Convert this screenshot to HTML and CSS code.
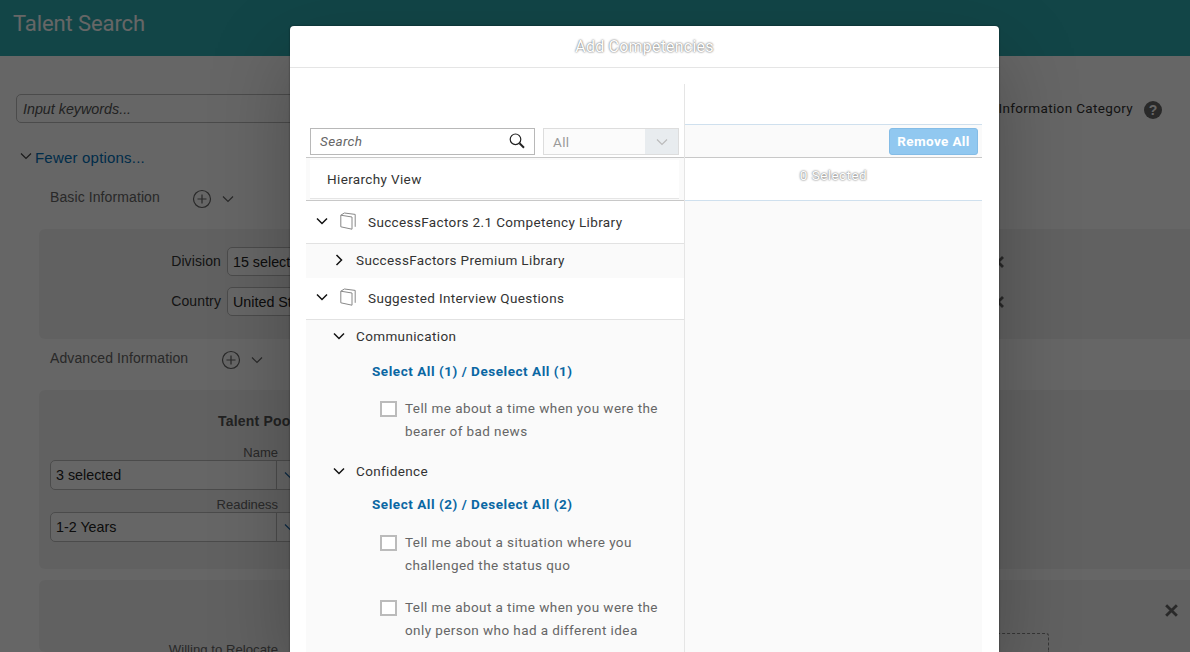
FILE: index.html
```html
<!DOCTYPE html>
<html lang="en">
<head>
  <meta charset="UTF-8" />
  <meta name="viewport" content="width=device-width, initial-scale=1" />
  <title>Talent Search</title>
  <link rel="stylesheet" href="styles.css">
</head>
<body>

  <svg class="sprite">
    <symbol id="chevron-down" viewBox="0 0 12 8"><path d="M1 1.5l5 5 5-5" /></symbol>
    <symbol id="chevron-right" viewBox="0 0 8 12"><path d="M1.5 1l5 5-5 5" /></symbol>
    <symbol id="plus" viewBox="0 0 20 20"><circle cx="10" cy="10" r="8.5" /><path d="M10 5.5v9M5.5 10h9" /></symbol>
    <symbol id="close" viewBox="0 0 14 14"><path d="M2 2l10 10M12 2L2 12" /></symbol>
    <symbol id="book" viewBox="0 0 16 18"><path d="M.8 3.2v11.6l11.2 2.4V5zM.8 3.2L4.4 1l10.8 1.4v12.4" /></symbol>
    <symbol id="search" viewBox="0 0 16 16"><circle cx="6.5" cy="6.3" r="5.3" /><path class="handle" d="M10.5 10.3l4.5 4.5" /></symbol>
  </svg>

  <div class="page">
    <header class="topbar">Talent Search</header>

    <div class="keywords">
      <div class="field keyword-input">Input keywords...</div>
      <span class="category">Information Category</span>
      <span class="help">?</span>
    </div>

    <div class="fewer">
      <svg class="icon chev"><use href="#chevron-down" /></svg>
      <span>Fewer options...</span>
    </div>

    <div class="section-title basic">
      <span>Basic Information</span>
      <svg class="icon plus"><use href="#plus" /></svg>
      <svg class="icon chev"><use href="#chevron-down" /></svg>
    </div>

    <div class="panel basic-panel">
      <div class="criteria">
        <label>Division</label>
        <div class="field">15 selected</div>
        <svg class="icon remove"><use href="#close" /></svg>
      </div>
      <div class="criteria">
        <label>Country</label>
        <div class="field">United States</div>
        <svg class="icon remove"><use href="#close" /></svg>
      </div>
    </div>

    <div class="section-title advanced">
      <span>Advanced Information</span>
      <svg class="icon plus"><use href="#plus" /></svg>
      <svg class="icon chev"><use href="#chevron-down" /></svg>
    </div>

    <div class="panel pool-panel">
      <h3>Talent Pool</h3>
      <label>Name</label>
      <div class="field combo">
        <span>3 selected</span>
        <svg class="icon chev"><use href="#chevron-down" /></svg>
      </div>
      <label>Readiness</label>
      <div class="field combo">
        <span>1-2 Years</span>
        <svg class="icon chev"><use href="#chevron-down" /></svg>
      </div>
    </div>

    <div class="panel relocate-panel">
      <svg class="icon remove"><use href="#close" /></svg>
      <div class="relocate">
        <label>Willing to Relocate</label>
        <div class="dropzone"></div>
      </div>
    </div>
  </div>

  <div class="overlay">
    <div class="modal">
      <div class="modal-title">Add Competencies</div>
      <div class="modal-body">
        <div class="left">
          <div class="filters">
            <div class="search">
              <em>Search</em>
              <svg class="icon"><use href="#search" /></svg>
            </div>
            <div class="select">
              <span>All</span>
              <div class="arrow"><svg class="icon chev"><use href="#chevron-down" /></svg></div>
            </div>
          </div>
          <div class="hierarchy"><div>Hierarchy View</div></div>

          <div class="library">
            <svg class="icon chev"><use href="#chevron-down" /></svg>
            <svg class="icon book"><use href="#book" /></svg>
            <span>SuccessFactors 2.1 Competency Library</span>
          </div>
          <div class="group premium">
            <svg class="icon chev-right"><use href="#chevron-right" /></svg>
            <span>SuccessFactors Premium Library</span>
          </div>
          <div class="library">
            <svg class="icon chev"><use href="#chevron-down" /></svg>
            <svg class="icon book"><use href="#book" /></svg>
            <span>Suggested Interview Questions</span>
          </div>

          <div class="group">
            <svg class="icon chev"><use href="#chevron-down" /></svg>
            <span>Communication</span>
          </div>
          <div class="select-all">Select All (1) / Deselect All (1)</div>
          <div class="question">
            <span class="box"></span>
            <p>Tell me about a time when you were the<br>bearer of bad news</p>
          </div>

          <div class="group">
            <svg class="icon chev"><use href="#chevron-down" /></svg>
            <span>Confidence</span>
          </div>
          <div class="select-all">Select All (2) / Deselect All (2)</div>
          <div class="question">
            <span class="box"></span>
            <p>Tell me about a situation where you<br>challenged the status quo</p>
          </div>
          <div class="question">
            <span class="box"></span>
            <p>Tell me about a time when you were the<br>only person who had a different idea</p>
          </div>
        </div>

        <div class="right">
          <div class="actions"><span class="remove-all">Remove All</span></div>
          <div class="count">0 Selected</div>
          <div class="selected-list"></div>
        </div>
      </div>
    </div>
  </div>

</body>
</html>
```

FILE: styles.css
```css
* {
  box-sizing: border-box;
}

body {
  margin: 0;
  height: 652px;
  overflow: hidden;
  position: relative;
  font-family: "Liberation Sans", Arial, sans-serif;
  font-size: 14px;
  color: #333;
  background: #fff;
}

.sprite {
  position: absolute;
  width: 0;
  height: 0;
}

.icon {
  fill: none;
  stroke: currentColor;
  stroke-width: 1.2;
  flex: none;
}

.chev {
  width: 12px;
  height: 8px;
}

/* page behind the dialog */
.page {
  height: 652px;
  overflow: hidden;
}

.topbar {
  height: 56px;
  padding-left: 13px;
  line-height: 47px;
  font-family: Roboto, sans-serif;
  font-size: 22px;
  letter-spacing: -0.1px;
  color: #fff;
  background: #2dacb2;
}

.keywords {
  display: flex;
  align-items: center;
  margin-top: 38px;
  padding: 0 28px 0 16px;
  height: 29px;
}

.field {
  height: 29px;
  border: 1px solid #bbb;
  border-radius: 5px;
  background: #fff;
  color: #222;
  font-size: 14.3px;
  line-height: 28px;
  padding-left: 5px;
  white-space: nowrap;
  overflow: hidden;
}

.keyword-input {
  width: 700px;
  padding-left: 6px;
  line-height: 29px;
  font-style: italic;
  color: #555;
}

.category {
  margin: -2px 0 0 auto;
  font-family: Roboto, sans-serif;
  font-size: 13.5px;
  letter-spacing: 0.35px;
}

.help {
  width: 18px;
  height: 18px;
  margin: 2px 0 0 11px;
  border-radius: 50%;
  background: #666;
  color: #fff;
  font-weight: bold;
  text-align: center;
  line-height: 18px;
}

.fewer {
  display: flex;
  align-items: center;
  height: 20px;
  margin: 24px 0 0 20px;
  font-size: 15px;
  letter-spacing: 0.2px;
  color: #0070b8;
}

.fewer .chev {
  color: #444;
  margin: -2px 3px 0 0;
}

.section-title {
  display: flex;
  align-items: center;
  height: 20px;
  padding-left: 50px;
  font-size: 14px;
  letter-spacing: 0.1px;
  color: #666;
}

.section-title .plus {
  width: 20px;
  height: 20px;
  margin: 3px 10px 0 auto;
}

.section-title .chev {
  margin-top: 4px;
}

.basic {
  width: 234px;
  margin-top: 20px;
}

.advanced {
  width: 263px;
  margin-top: 9px;
}

.panel {
  margin-left: 39px;
  border-radius: 6px 0 0 6px;
  background: #f3f3f3;
}

.basic-panel {
  height: 110px;
  margin-top: 22px;
  padding-top: 18px;
}

.criteria {
  display: flex;
  align-items: center;
  margin-bottom: 11px;
}

.criteria label {
  width: 182px;
  margin: -1px 6px 0 0;
  text-align: right;
  letter-spacing: 0.1px;
}

.criteria .field {
  width: 260px;
}

.remove {
  width: 14px;
  height: 14px;
  stroke-width: 2.8;
  color: #666;
}

.criteria .remove {
  margin-left: 504px;
}

.pool-panel {
  height: 179px;
  margin-top: 22px;
  padding: 22px 0 0 11px;
}

.pool-panel h3 {
  margin: 0 0 14px;
  padding-left: 168px;
  font-size: 14px;
  line-height: 18px;
  letter-spacing: 0.2px;
  color: #555;
}

.pool-panel label {
  display: block;
  width: 228px;
  height: 16px;
  line-height: 17px;
  font-size: 13px;
  text-align: right;
  color: #666;
}

.combo {
  display: flex;
  align-items: center;
  width: 258px;
  height: 30px;
  margin-bottom: 6px;
}

.combo span {
  width: 221px;
  height: 28px;
  line-height: 29px;
  border-right: 1px solid #bbb;
}

.combo .chev {
  margin-left: 7px;
  color: #1b67a8;
}

.relocate-panel {
  height: 72px;
  margin-top: 11px;
  padding-top: 23px;
}

.relocate-panel .remove {
  display: block;
  width: 15px;
  height: 15px;
  margin-left: 1124.5px;
  stroke-width: 2.6;
}

.relocate {
  display: flex;
  height: 19px;
  margin-top: 15px;
}

.relocate label {
  width: 239px;
  padding-top: 9px;
  font-size: 13.2px;
  line-height: 15px;
  text-align: right;
  color: #666;
}

.dropzone {
  width: 739px;
  height: 19px;
  margin-left: 32px;
  border: 1px dashed #888;
  border-bottom: 0;
  border-radius: 3px 3px 0 0;
}

/* dialog */
.overlay {
  position: absolute;
  inset: 0;
  display: flex;
  align-items: flex-start;
  padding: 26px 0 0 290px;
  overflow: hidden;
  background: rgba(0, 0, 0, 0.6);
}

.modal {
  width: 709px;
  height: 626px;
  border-radius: 4px 4px 0 0;
  background: #fff;
  box-shadow: 0 30px 80px rgba(0, 0, 0, 0.25), 0 0 2px rgba(0, 0, 0, 0.5);
  font-family: Roboto, sans-serif;
  font-size: 13.5px;
  letter-spacing: 0.36px;
}

.modal-title {
  height: 42px;
  border-bottom: 1px solid #e5e5e5;
  font-size: 16px;
  line-height: 41px;
  letter-spacing: 0.2px;
  text-align: center;
  color: #fff;
  text-shadow: 0 0 2px #333;
}

.modal-body {
  display: flex;
  padding: 16px 17px 0 16px;
}

.left {
  width: 379px;
  height: 568px;
  border-right: 1px solid #e5e5e5;
  background: #fafafa;
}

.filters {
  display: flex;
  gap: 8px;
  padding: 44px 4px 2px;
  border-bottom: 1px solid #c8c8c8;
  background: #fff;
}

.search {
  display: flex;
  align-items: center;
  justify-content: space-between;
  width: 225px;
  height: 27px;
  padding: 0 9px 1px;
  border: 1px solid #b8b8b8;
  color: #666;
}

.search .icon {
  width: 16px;
  height: 16px;
  margin-top: -1px;
  color: #222;
}

.handle {
  stroke-width: 2;
}

.select {
  display: flex;
  align-items: center;
  justify-content: space-between;
  width: 136px;
  height: 27px;
  padding-left: 9px;
  border: 1px solid #ddd;
  background: #fbfbfb;
  color: #999;
}

.arrow {
  display: flex;
  align-items: center;
  justify-content: center;
  width: 33px;
  height: 25px;
  background: #e8ecef;
  color: #bbb;
}

.hierarchy {
  height: 43px;
  padding: 2px 5px 1px 4px;
  border-bottom: 1px solid #c8c8c8;
}

.hierarchy div {
  height: 39px;
  padding-left: 17px;
  border-bottom: 1px solid #e5e5e5;
  background: #fff;
  line-height: 39px;
  color: #333;
}

.library {
  display: flex;
  align-items: center;
  height: 43px;
  padding-left: 10px;
  border-bottom: 1px solid #e2e2e2;
  background: #fff;
  color: #333;
}

.library .chev,
.group .icon {
  stroke-width: 1.5;
  color: #111;
}

.library .chev {
  margin-top: -2px;
}

.book {
  width: 16px;
  height: 18px;
  margin: -2px 12px 0 12px;
  stroke-width: 1;
  color: #888;
}

.group {
  display: flex;
  align-items: center;
  height: 34px;
  padding: 0 0 2px 27px;
  color: #333;
}

.group .icon {
  margin-right: 11px;
}

.chev-right {
  width: 8px;
  height: 12px;
}

.premium {
  padding-left: 29px;
}

.premium .icon {
  margin-right: 13px;
}

.premium + .library {
  height: 42px;
  padding-bottom: 1px;
}

.select-all {
  height: 36px;
  padding-left: 66px;
  line-height: 35px;
  font-weight: bold;
  letter-spacing: 0.54px;
  color: #0a67a3;
}

.question {
  display: flex;
  align-items: flex-start;
  height: 65px;
  padding: 7px 0 0 74px;
  letter-spacing: 0.42px;
  color: #666;
}

.question + .group {
  height: 32px;
  padding-bottom: 1px;
}

.question + .group + .select-all {
  height: 37px;
}

.question p {
  margin: 0 0 0 8px;
  line-height: 23px;
}

.box {
  width: 17px;
  height: 16px;
  margin-top: 4px;
  border: 2px solid #bbb;
  background: #fff;
}

.right {
  display: flex;
  flex-direction: column;
  width: 297px;
  height: 568px;
  padding-top: 40px;
}

.actions {
  display: flex;
  justify-content: flex-end;
  height: 34px;
  padding: 3px 4px 0 0;
  border-top: 1px solid #cfe0ee;
  border-bottom: 1px solid #c8c8c8;
  background: #fafafa;
}

.remove-all {
  width: 89px;
  height: 27px;
  border: 1px solid #84bce6;
  border-radius: 3px;
  background: #91c8f0;
  color: #fff;
  font-weight: bold;
  line-height: 25px;
  text-align: center;
}

.count {
  height: 43px;
  border-bottom: 1px solid #cfe0ee;
  line-height: 35px;
  letter-spacing: 0.45px;
  text-align: center;
  color: #fff;
  text-shadow: 0 0 2px #333;
}

.selected-list {
  flex: 1;
  background: #fafafa;
}
```
